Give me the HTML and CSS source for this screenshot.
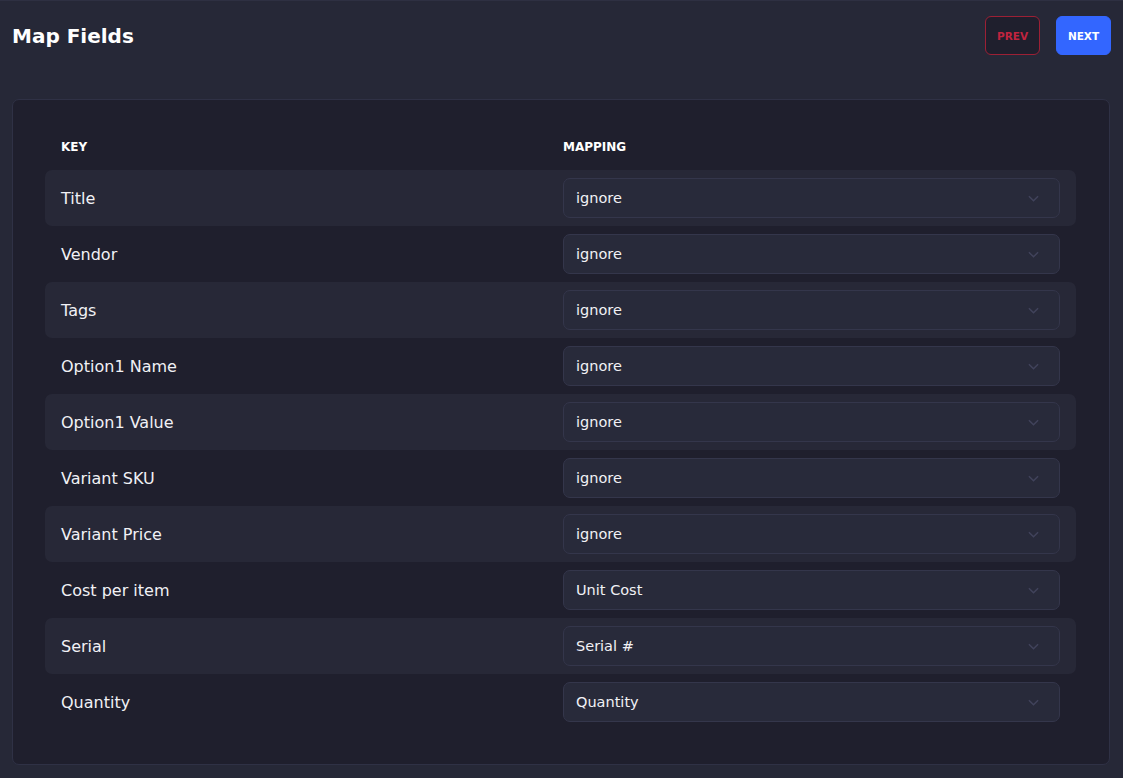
FILE: index.html
```html
<!DOCTYPE html>
<html lang="en">
<head>
    <meta charset="UTF-8">
    <meta name="viewport" content="width=device-width, initial-scale=1.0">
    <title>Map Fields</title>
    <link rel="stylesheet" href="styles.css">
</head>
<body>
    <div class="page">
        <div class="page-header">
            <h1>Map Fields</h1>
            <div class="actions">
                <button class="btn btn-prev">PREV</button>
                <button class="btn btn-next">NEXT</button>
            </div>
        </div>

        <div class="card">
            <div class="table">
                <div class="table-head">
                    <div class="cell">KEY</div>
                    <div class="cell">MAPPING</div>
                </div>

                <div class="row">
                    <div class="cell key">Title</div>
                    <div class="cell">
                        <div class="select-wrap">
                            <select><option>ignore</option></select>
                            <svg class="chevron" viewBox="0 0 12 7"><path d="M1 1l5 5 5-5"/></svg>
                        </div>
                    </div>
                </div>
                <div class="row">
                    <div class="cell key">Vendor</div>
                    <div class="cell">
                        <div class="select-wrap">
                            <select><option>ignore</option></select>
                            <svg class="chevron" viewBox="0 0 12 7"><path d="M1 1l5 5 5-5"/></svg>
                        </div>
                    </div>
                </div>
                <div class="row">
                    <div class="cell key">Tags</div>
                    <div class="cell">
                        <div class="select-wrap">
                            <select><option>ignore</option></select>
                            <svg class="chevron" viewBox="0 0 12 7"><path d="M1 1l5 5 5-5"/></svg>
                        </div>
                    </div>
                </div>
                <div class="row">
                    <div class="cell key">Option1 Name</div>
                    <div class="cell">
                        <div class="select-wrap">
                            <select><option>ignore</option></select>
                            <svg class="chevron" viewBox="0 0 12 7"><path d="M1 1l5 5 5-5"/></svg>
                        </div>
                    </div>
                </div>
                <div class="row">
                    <div class="cell key">Option1 Value</div>
                    <div class="cell">
                        <div class="select-wrap">
                            <select><option>ignore</option></select>
                            <svg class="chevron" viewBox="0 0 12 7"><path d="M1 1l5 5 5-5"/></svg>
                        </div>
                    </div>
                </div>
                <div class="row">
                    <div class="cell key">Variant SKU</div>
                    <div class="cell">
                        <div class="select-wrap">
                            <select><option>ignore</option></select>
                            <svg class="chevron" viewBox="0 0 12 7"><path d="M1 1l5 5 5-5"/></svg>
                        </div>
                    </div>
                </div>
                <div class="row">
                    <div class="cell key">Variant Price</div>
                    <div class="cell">
                        <div class="select-wrap">
                            <select><option>ignore</option></select>
                            <svg class="chevron" viewBox="0 0 12 7"><path d="M1 1l5 5 5-5"/></svg>
                        </div>
                    </div>
                </div>
                <div class="row">
                    <div class="cell key">Cost per item</div>
                    <div class="cell">
                        <div class="select-wrap">
                            <select><option>Unit Cost</option></select>
                            <svg class="chevron" viewBox="0 0 12 7"><path d="M1 1l5 5 5-5"/></svg>
                        </div>
                    </div>
                </div>
                <div class="row">
                    <div class="cell key">Serial</div>
                    <div class="cell">
                        <div class="select-wrap">
                            <select><option>Serial #</option></select>
                            <svg class="chevron" viewBox="0 0 12 7"><path d="M1 1l5 5 5-5"/></svg>
                        </div>
                    </div>
                </div>
                <div class="row">
                    <div class="cell key">Quantity</div>
                    <div class="cell">
                        <div class="select-wrap">
                            <select><option>Quantity</option></select>
                            <svg class="chevron" viewBox="0 0 12 7"><path d="M1 1l5 5 5-5"/></svg>
                        </div>
                    </div>
                </div>
            </div>
        </div>
    </div>
</body>
</html>
```

FILE: styles.css
```css
body {
    margin: 0;
    background-color: #262837;
    font-family: "DejaVu Sans", "Noto Sans", sans-serif;
    color: #f1f1f5;
}
.page {
    min-height: 778px;
    box-sizing: border-box;
    border-top: 1px solid #2e3042;
}
.page-header {
    display: flex;
    justify-content: space-between;
    align-items: center;
    padding: 15px 12px 0 12px;
}
.page-header h1 {
    margin: 0;
    font-size: 20px;
    font-weight: bold;
    color: #ffffff;
}
.actions {
    display: flex;
    gap: 16px;
}
.btn {
    width: 55px;
    height: 39px;
    padding: 0;
    border-radius: 6px;
    font-family: inherit;
    font-size: 10.5px;
    font-weight: bold;
    cursor: pointer;
}
.btn-prev {
    background-color: #1f1f2d;
    border: 1px solid #9c2035;
    color: #c0243f;
}
.btn-next {
    background-color: #3366ff;
    border: 1px solid #3366ff;
    color: #ffffff;
}
.card {
    margin: 44px 13px 0 12px;
    padding: 23px 33px 34px 32px;
    background-color: #1f1f2d;
    border: 1px solid #2f3145;
    border-radius: 7px;
}
.table-head,
.row {
    display: grid;
    grid-template-columns: 502px 1fr;
    align-items: center;
}
.table-head {
    height: 47px;
    font-size: 12px;
    font-weight: bold;
    color: #ffffff;
}
.cell {
    padding: 0 16px;
}
.row {
    height: 56px;
    border-radius: 7px;
}
.row:nth-child(even) {
    background-color: #272837;
}
.key {
    font-size: 16px;
    color: #f1f1f5;
}
.select-wrap {
    position: relative;
}
.select-wrap select {
    width: 100%;
    height: 40px;
    padding: 0 12px;
    appearance: none;
    -webkit-appearance: none;
    background-color: #282a3a;
    border: 1px solid #34364b;
    border-radius: 7px;
    font-family: inherit;
    font-size: 14.5px;
    color: #f1f1f5;
    outline: none;
}
.chevron {
    position: absolute;
    right: 21px;
    top: 17px;
    width: 11px;
    height: 7px;
    fill: none;
    stroke: #41435b;
    stroke-width: 1.6;
}
```
